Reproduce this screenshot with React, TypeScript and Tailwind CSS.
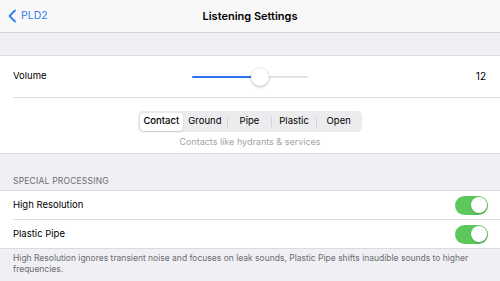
export default function App() {
  return (
    <div
      className="w-[500px] h-[281px] overflow-hidden bg-[#efeff4] text-black"
      style={{ fontFamily: "Inter, 'Noto Sans', sans-serif" }}
    >
      {/* Nav bar */}
      <div className="relative h-[33px] bg-[#f8f8f8] border-b border-[#d4d4d8] flex items-center">
        <div className="flex items-center pl-[7px] text-[#3478f6]">
          <svg width="10" height="14" viewBox="0 0 10 14" fill="none">
            <path d="M8 1.5 L2.5 7 L8 12.5" stroke="#3478f6" strokeWidth="1.8" strokeLinecap="round" strokeLinejoin="round" />
          </svg>
          <span className="ml-[4px] text-[10.5px] leading-none">PLD2</span>
        </div>
        <div className="absolute inset-x-0 top-0 h-full flex items-center justify-center pointer-events-none">
          <span className="text-[11px] font-semibold leading-none">Listening Settings</span>
        </div>
      </div>

      <div className="h-[22px]" />

      {/* Volume section */}
      <div className="bg-white border-y border-[#dcdce0]">
        <div className="h-[41px] flex items-center pl-[13px] pr-[14px]">
          <span className="text-[9.5px] w-[179px]">Volume</span>
          <div className="relative w-[116px] h-[20px] flex items-center">
            <div className="h-[2px] w-full bg-[#e3e3e6] rounded-full" />
            <div className="absolute left-0 h-[2px] w-[68px] bg-[#2f73f0] rounded-full" />
            <div className="absolute left-[59px] w-[18px] h-[18px] rounded-full bg-white shadow-[0_1px_3px_rgba(0,0,0,0.25),0_0_0_0.5px_rgba(0,0,0,0.06)]" />
          </div>
          <span className="ml-auto text-[10px]">12</span>
        </div>
        <div className="ml-[13px] h-px bg-[#dcdce0]" />
        <div className="pt-[13px] pb-[5px] flex flex-col items-center">
          <div className="w-[224px] h-[21px] rounded-[5px] bg-[#ececee] p-[1.5px] flex items-stretch text-[9.5px]">
            <div className="flex-1 rounded-[4px] bg-white shadow-[0_1px_2px_rgba(0,0,0,0.15)] flex items-center justify-center font-medium">
              Contact
            </div>
            <div className="flex-1 flex items-center justify-center">Ground</div>
            <div className="w-px my-[4px] bg-[#d2d2d6]" />
            <div className="flex-1 flex items-center justify-center">Pipe</div>
            <div className="w-px my-[4px] bg-[#d2d2d6]" />
            <div className="flex-1 flex items-center justify-center">Plastic</div>
            <div className="w-px my-[4px] bg-[#d2d2d6]" />
            <div className="flex-1 flex items-center justify-center">Open</div>
          </div>
          <span className="mt-[4px] text-[9px] leading-[12px] text-[#a3a3a8]">Contacts like hydrants &amp; services</span>
        </div>
      </div>

      {/* Special processing */}
      <div className="h-[36px] flex items-end pl-[13px] pb-[4px]">
        <span className="text-[8.5px] leading-[10px] text-[#6d6d72] tracking-[0.2px]">SPECIAL PROCESSING</span>
      </div>
      <div className="bg-white border-y border-[#dcdce0]">
        <Row label="High Resolution" />
        <div className="ml-[13px] h-px bg-[#dcdce0]" />
        <Row label="Plastic Pipe" />
      </div>
      <p className="px-[13px] pt-[4px] text-[8.5px] leading-[11px] text-[#6d6d72]">
        High Resolution ignores transient noise and focuses on leak sounds, Plastic Pipe shifts inaudible sounds to higher
        frequencies.
      </p>
    </div>
  );
}

function Row({ label }: { label: string }) {
  return (
    <div className="h-[28px] flex items-center pl-[13px] pr-[12px]">
      <span className="text-[9.5px]">{label}</span>
      <div className="ml-auto w-[33px] h-[19px] rounded-full bg-[#5ac85a] p-[1.5px] flex justify-end">
        <div className="w-[16px] h-[16px] rounded-full bg-white shadow-[0_1px_2px_rgba(0,0,0,0.2)]" />
      </div>
    </div>
  );
}
